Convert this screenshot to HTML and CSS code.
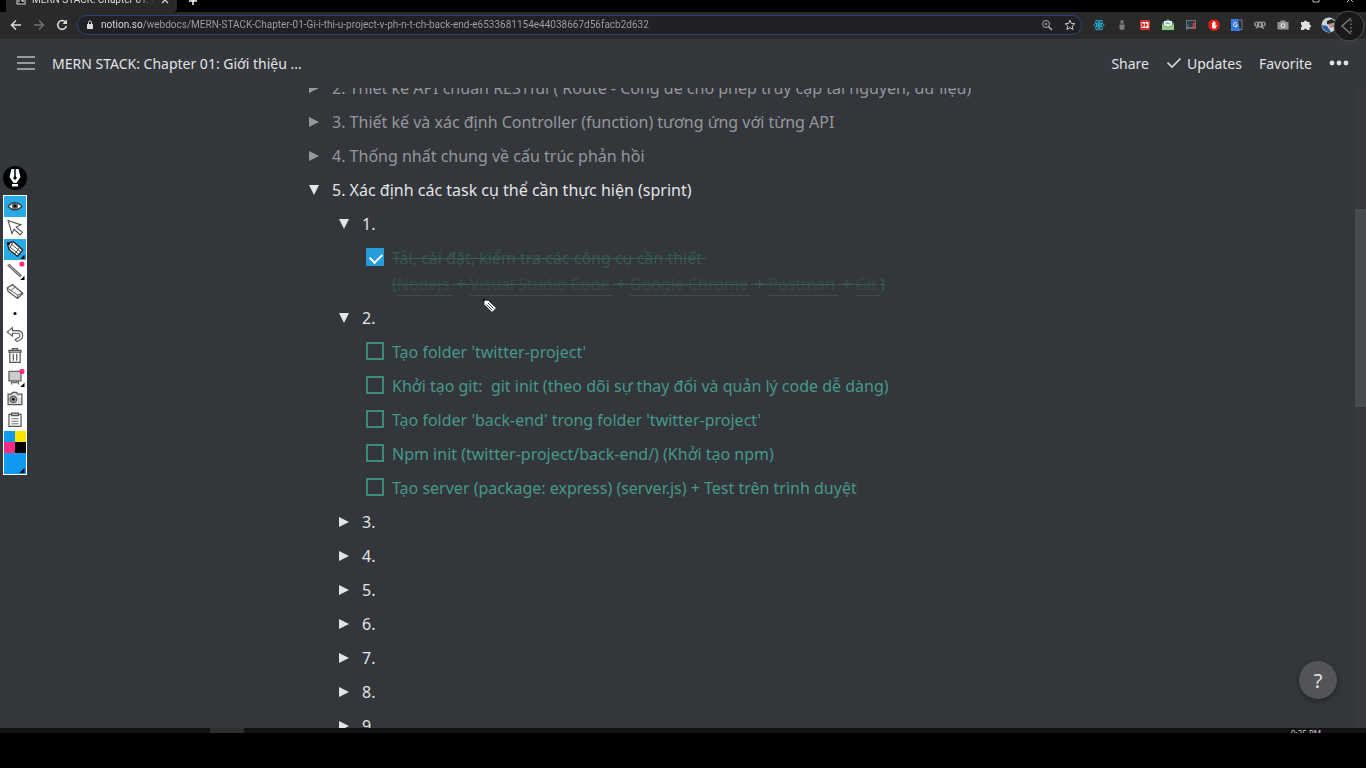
FILE: index.html
```html
<!DOCTYPE html>
<html lang="vi">
<head>
<meta charset="utf-8">
<title>MERN STACK: Chapter 01</title>
<link rel="stylesheet" href="styles.css">
</head>
<body>
<svg class="defs" width="0" height="0" aria-hidden="true">
  <symbol id="tri" viewBox="0 0 10 10"><path d="M0 0 10 5 0 10z" fill="currentColor"/></symbol>
  <symbol id="tri-down" viewBox="0 0 10 10"><path d="M0 0H10L5 10z" fill="currentColor"/></symbol>
</svg>

<div class="tabstrip">
  <div class="tab">
    <svg class="favicon" width="10" height="10" viewBox="0 0 10 10"><rect x="1" y="0" width="8" height="9" fill="#111" stroke="#ddd"/><path d="M3 7.500V2L7 7V2" fill="none" stroke="#fff"/></svg>
    <span class="tab-title">MERN STACK: Chapter 01: Giới thiệu</span>
    <button class="tab-close" aria-label="Close tab"><svg width="8" height="8" viewBox="0 0 8 8"><path d="M1 1l6 6M7 1l-6 6" stroke="#ddd" stroke-width="1.200"/></svg></button>
  </div>
  <button class="tab-new" aria-label="New tab"><svg width="10" height="10" viewBox="0 0 10 10"><path d="M5 1v8M1 5h8" stroke="#fff" stroke-width="1.500"/></svg></button>
  <div class="window-buttons">
    <svg width="8" height="8" viewBox="0 0 8 8"><path d="M1 1h6v6H1z" fill="none" stroke="#bbb"/></svg>
    <svg width="8" height="8" viewBox="0 0 8 8"><path d="M1 1l6 6M7 1l-6 6" stroke="#bbb"/></svg>
  </div>
</div>

<div class="toolbar">
  <button aria-label="Back"><svg width="12" height="12" viewBox="0 0 12 12"><path d="M11 6H2M6 1.500 1.500 6 6 10.500" fill="none" stroke="#ddd" stroke-width="1.500"/></svg></button>
  <button aria-label="Forward"><svg width="12" height="12" viewBox="0 0 12 12"><path d="M1 6h9M6 1.500 10.500 6 6 10.500" fill="none" stroke="#6f7072" stroke-width="1.500"/></svg></button>
  <button aria-label="Reload"><svg width="12" height="12" viewBox="0 0 12 12"><path d="M9.800 3.500A4.400 4.400 0 1 0 10.400 7" fill="none" stroke="#ddd" stroke-width="1.500"/><path d="M11 .5V5H6.500z" fill="#ddd"/></svg></button>
  <div class="omnibox">
    <svg width="8" height="10" viewBox="0 0 8 10"><rect x="1" y="4" width="6" height="5" rx=".5" fill="#ddd"/><path d="M2.500 4V2.500a1.500 1.500 0 0 1 3 0V4" fill="none" stroke="#ddd"/></svg>
    <input class="address" aria-label="Address" value="notion.so/webdocs/MERN-STACK-Chapter-01-Gi-i-thi-u-project-v-ph-n-t-ch-back-end-e6533681154e44038667d56facb2d632">
    <svg width="12" height="12" viewBox="0 0 12 12" fill="none" stroke="#aaa"><circle cx="5" cy="5" r="3.500"/><path d="M7.600 7.600 11 11" stroke-width="1.500"/><path d="M3.500 5h3M5 3.500v3" stroke-width=".8"/></svg>
    <svg width="12" height="12" viewBox="0 0 12 12"><path d="M6 1.200 7.400 4.500l3.500.2-2.700 2.300.9 3.500L6 8.600 2.900 10.500l.9-3.500L1.100 4.700l3.500-.2z" fill="none" stroke="#ccc"/></svg>
  </div>
  <div class="extensions">
    <svg viewBox="0 0 12 12" fill="none" stroke="#25a9c9" stroke-width=".9"><ellipse cx="6" cy="6" rx="5.200" ry="2"/><ellipse cx="6" cy="6" rx="5.200" ry="2" transform="rotate(60 6 6)"/><ellipse cx="6" cy="6" rx="5.200" ry="2" transform="rotate(120 6 6)"/><circle cx="6" cy="6" r="1" fill="#25a9c9"/></svg>
    <svg viewBox="0 0 12 12" fill="#7b7c7d"><circle cx="6" cy="2.500" r="1.600"/><path d="M3.500 4.500h5v1h-5zM3.500 6h5v2.500a2.500 2.500 0 0 1-5 0z"/></svg>
    <svg viewBox="0 0 12 12"><rect x="1" y="1" width="10" height="10" rx="1.500" fill="#d9302c"/><rect x="2.500" y="3" width="7" height="6" rx=".5" fill="#fff"/><path d="M3 3.500 6 6 3 8.500zM6 3.500 9 6 6 8.500z" fill="#d9302c"/></svg>
    <svg viewBox="0 0 12 12"><path d="M0 4 6 0l6 4v7H0z" fill="#4fa35b"/><path d="M2 2h8v4L6 8 2 6z" fill="#f1f1f1"/><path d="M3.500 5 5 3.500 6 5l2-1.500" fill="none" stroke="#4c72a8" stroke-width=".8"/><path d="M0 5l6 4 6-4v6H0z" fill="#91ce8e"/></svg>
    <svg viewBox="0 0 12 12"><path d="M1 1h10v9H4L1 11z" fill="#6a6f78"/><path d="M2 2h8v6H2z" fill="#333a4c"/><path d="M2 5h2v3H2z" fill="#335c99"/><path d="M8 4h2l-1 6H7z" fill="#d04332"/></svg>
    <svg viewBox="0 0 12 12"><path d="M3.500.5h5l3 3v5l-3 3h-5l-3-3v-5z" fill="#e51d17"/><path d="M4 9V4h.8v2V2.500h.9V6 2h.9v4-3h.9v4l.9-1 .5.500L7.500 9.500h-2z" fill="#fff"/></svg>
    <svg viewBox="0 0 12 12"><path d="M0 0h7l2 12H0z" fill="#377be5"/><path d="M6 1h5v9.500H8" fill="none" stroke="#6d7d94"/><path d="M6 4.200A2 2 0 1 0 6.500 6H4.700" fill="none" stroke="#fff" stroke-width=".9"/></svg>
    <svg viewBox="0 0 12 12" fill="none" stroke="#a6a6a6" stroke-width="1.200"><circle cx="2.800" cy="5" r="2"/><circle cx="6" cy="5.500" r="2.300"/><circle cx="9.200" cy="5" r="2"/><path d="M2 9l2-1M7 8l3 1.500"/></svg>
    <svg viewBox="0 0 12 12"><path d="M.5 3H3l1-1.500h4L9 3h2.500v7.500H.5z" fill="#929394"/><circle cx="6" cy="6.500" r="2.300" fill="#eee"/><circle cx="6" cy="6.500" r="1.200" fill="#777"/></svg>
    <svg viewBox="0 0 12 12"><path d="M1 3h3a1.500 1.500 0 1 1 3 0h2.500v2.500a1.500 1.500 0 1 1 0 3V11H7a1.500 1.500 0 0 0-3 0H1V8.300a1.500 1.500 0 0 0 0-2.800z" fill="#e2e2e2"/></svg>
  </div>
  <svg class="avatar" viewBox="0 0 16 16"><circle cx="8" cy="8" r="7.500" fill="#c9d4dc"/><path d="M1 8l5 1 4 6A7.500 7.500 0 0 1 1 8z" fill="#275b9c"/><path d="M6 4l5-2 3 3-4 3-4-1z" fill="#292425"/><path d="M7 7l5-1 1 4-4 1z" fill="#c98b85"/></svg>
</div>

<header class="topbar">
  <button class="menu" aria-label="Menu"><svg width="18" height="16" viewBox="0 0 18 16"><path d="M0 2h18M0 8h18M0 14h18" stroke="#b9babc" stroke-width="1.600"/></svg></button>
  <h1>MERN STACK: Chapter 01: Giới thiệu ...</h1>
  <nav class="actions">
    <button>Share</button>
    <button class="updates"><svg width="16" height="12" viewBox="0 0 16 12"><path d="M1.500 5.500 6 10 14.500 1.500" fill="none" stroke="#d6d7d8" stroke-width="1.700"/></svg>Updates</button>
    <button>Favorite</button>
    <button aria-label="More"><svg width="20" height="6" viewBox="0 0 20 6" fill="#e0e1e2"><circle cx="3" cy="3" r="2.400"/><circle cx="10" cy="3" r="2.400"/><circle cx="17" cy="3" r="2.400"/></svg></button>
  </nav>
</header>

<main class="page">
  <ul class="outline">
    <li class="muted"><button class="toggle"><svg><use href="#tri"/></svg>2. Thiết kế API chuẩn RESTful ( Route - Cổng để cho phép truy cập tài nguyên, dữ liệu)</button></li>
    <li class="muted"><button class="toggle"><svg><use href="#tri"/></svg>3. Thiết kế và xác định Controller (function) tương ứng với từng API</button></li>
    <li class="muted"><button class="toggle"><svg><use href="#tri"/></svg>4. Thống nhất chung về cấu trúc phản hồi</button></li>
    <li><button class="toggle"><svg><use href="#tri-down"/></svg>5. Xác định các task cụ thể cần thực hiện (sprint)</button>
      <ul>
        <li><button class="toggle"><svg><use href="#tri-down"/></svg>1.</button>
          <ul>
            <li class="task done"><input type="checkbox" id="t0" checked><label for="t0"><s>Tải, cài đặt, kiểm tra các công cụ cần thiết&nbsp;<br>(<a href="#nodejs">Nodejs</a> + <a href="#vscode">Visual Studio Code</a> + <a href="#chrome">Google Chrome</a> + <a href="#postman">Postman</a> + <a href="#git">Git</a>)</s></label></li>
          </ul>
        </li>
        <li><button class="toggle"><svg><use href="#tri-down"/></svg>2.</button>
          <ul>
            <li class="task"><input type="checkbox" id="t1"><label for="t1">Tạo folder 'twitter-project'</label></li>
            <li class="task"><input type="checkbox" id="t2"><label for="t2">Khởi tạo git:&nbsp; git init (theo dõi sự thay đổi và quản lý code dễ dàng)</label></li>
            <li class="task"><input type="checkbox" id="t3"><label for="t3">Tạo folder 'back-end' trong folder 'twitter-project'</label></li>
            <li class="task"><input type="checkbox" id="t4"><label for="t4">Npm init (twitter-project/back-end/) (Khởi tạo npm)</label></li>
            <li class="task"><input type="checkbox" id="t5"><label for="t5">Tạo server (package: express) (server.js) + Test trên trình duyệt</label></li>
          </ul>
        </li>
        <li><button class="toggle"><svg><use href="#tri"/></svg>3.</button></li>
        <li><button class="toggle"><svg><use href="#tri"/></svg>4.</button></li>
        <li><button class="toggle"><svg><use href="#tri"/></svg>5.</button></li>
        <li><button class="toggle"><svg><use href="#tri"/></svg>6.</button></li>
        <li><button class="toggle"><svg><use href="#tri"/></svg>7.</button></li>
        <li><button class="toggle"><svg><use href="#tri"/></svg>8.</button></li>
        <li><button class="toggle"><svg><use href="#tri"/></svg>9.</button></li>
      </ul>
    </li>
  </ul>
  <div class="scrollbar"><div class="thumb"></div></div>
  <button class="help" aria-label="Help">?</button>
</main>

<footer class="taskbar"><span class="running"></span><span class="clock">9:25 PM</span></footer>

<aside class="pen-tools">
  <svg class="nib" width="24" height="24" viewBox="0 0 24 24"><circle cx="12" cy="12" r="12" fill="#000"/><path d="M8.500 3h7l2 8-4 6h-3l-4-6z" fill="#fff"/><path d="M9 18h6v2.500H9z" fill="#fff"/><path d="M12 3v8" stroke="#000" stroke-width="1.500"/><circle cx="12" cy="12" r="1.700"/></svg>
  <div class="palette">
    <button class="on" aria-label="Show"><svg viewBox="0 0 22 22"><path d="M3 11q8-9 16 0-8 8-16 0z" fill="#fff" stroke="#333" stroke-width="1.300"/><circle cx="11" cy="10.500" r="3.500" fill="#555"/><circle cx="11" cy="10.500" r="1.500"/></svg></button>
    <button aria-label="Select"><svg viewBox="0 0 22 22"><path d="M3 3l15 5-5.500 2.500 7 6-2.500 3-7-6.500-2.500 5z" fill="#fff" stroke="#555" stroke-width="1.300"/></svg></button>
    <button class="on" aria-label="Pen"><svg viewBox="0 0 22 22"><path d="M2 3.500 9 2l11 9.500-6 7.500L4 11z" fill="#fff" stroke="#222" stroke-width="1.500"/><path d="M2 3.500 6 3 4 7z"/><path d="M7 5 18 14M5 8l11 9M9 2 4 11M16 9l-5 7" stroke="#333"/><path d="M22 17v5h-5z"/></svg></button>
    <button aria-label="Line"><svg viewBox="0 0 22 22"><path d="M3 4 18 18" stroke="#555" stroke-width="3"/><path d="M3 4 18 18" stroke="#ddd"/><circle cx="19" cy="3.500" r="3" fill="#ff2c86"/><path d="M22 17v5h-5z"/></svg></button>
    <button aria-label="Eraser"><svg viewBox="0 0 22 22"><path d="M2 7l6-4 12 10-6 6L3 11z" fill="#f4f4f4" stroke="#555" stroke-width="1.400"/><path d="M2 7l12 8 6-2M14 15v4M11 6 6 10" fill="none" stroke="#555"/></svg></button>
    <button aria-label="Size"><svg viewBox="0 0 22 22"><circle cx="11" cy="11" r="1.800"/></svg></button>
    <button aria-label="Undo"><svg viewBox="0 0 22 22"><path d="M8 3 2 8l6 5v-3.500h6q4 .5 2 4.500L11 17l2 2q7-1.500 7-7 0-5.500-7-5.500H8z" fill="#fff" stroke="#555" stroke-width="1.200"/></svg></button>
    <button aria-label="Delete"><svg viewBox="0 0 22 22" fill="none" stroke="#555" stroke-width="1.400"><path d="M5 7h12v12H5zM4 5h14v2H4zM8 5V3h6v2M9 9v8M13 9v8"/></svg></button>
    <button aria-label="Board"><svg viewBox="0 0 22 22"><path d="M4 4h14v11H4zM7 15v4M15 15v4M9 15v2h4v-2" fill="#ccc" stroke="#666" stroke-width="1.500"/><circle cx="19" cy="4" r="3" fill="#ff2c86"/><path d="M22 17v5h-5z"/></svg></button>
    <button aria-label="Capture"><svg viewBox="0 0 22 22"><path d="M3 6h4l1-2h5l1 2h5v12H3z" fill="#ddd" stroke="#555" stroke-width="1.400"/><circle cx="9" cy="12" r="4" fill="#999" stroke="#444"/><circle cx="9" cy="12" r="1.500"/><path d="M15 8h3v2h-3z" fill="#fff"/></svg></button>
    <button aria-label="Clipboard"><svg viewBox="0 0 22 22" fill="none" stroke="#555" stroke-width="1.400"><path d="M4 5h14v14H4z"/><path d="M7 3.500h8v3H7z" fill="#bbb"/><path d="M7 10h8M7 13h8M7 16h8" stroke-width="1"/></svg></button>
    <div class="swatches">
      <button class="blue" aria-label="Blue"></button><button class="yellow" aria-label="Yellow"></button>
      <button class="pink" aria-label="Pink"></button><button class="black" aria-label="Black"></button>
    </div>
    <button class="current" aria-label="Current colour"><svg viewBox="0 0 22 22"><path d="M22 16v6h-6z"/></svg></button>
  </div>
</aside>

<svg class="cursor" width="16" height="16" viewBox="0 0 16 16"><path d="M1.500 1.500 6.500 2.500l8 7.500-4.500 4.500-8-8z" fill="#fff" stroke="#222"/><path d="M6 5 11.500 10.500M4.500 6.500 10 12" stroke="#333"/><path d="M1 1l3 .5L1.500 4z"/></svg>
<button class="recorder" aria-label="Open panel"><svg width="32" height="32" viewBox="0 0 32 32"><circle cx="16" cy="16" r="15" fill="#19191a" stroke="#505050"/><path d="M18 8l-9 8 9 8" fill="none" stroke="#77787a" stroke-width="1.500"/><path d="M18 10v14" stroke="#77787a" stroke-width="1.500" stroke-dasharray="1.500 2"/></svg></button>
</body>
</html>
```
FILE: styles.css
```css
* { box-sizing: border-box; }

body {
  margin: 0;
  height: 100vh;
  display: flex;
  flex-direction: column;
  overflow: hidden;
  position: relative;
  background: #000;
  color: #e3e4e5;
  font-family: "Segoe UI", "Noto Sans", "Open Sans", sans-serif;
  font-size: 16px;
}

button {
  margin: 0;
  padding: 0;
  border: 0;
  background: none;
  color: inherit;
  font: inherit;
}

svg { display: block; flex: none; }
.defs { position: absolute; }

.tabstrip {
  flex: none;
  height: 12px;
  display: flex;
  align-items: flex-start;
  padding-left: 6px;
  overflow: hidden;
}
.tab {
  display: flex;
  align-items: center;
  gap: 6px;
  width: 171px;
  height: 12px;
  padding: 0 8px 12px 10px;
  background: #2a2a2b;
  border-radius: 0 0 4px 0;
}
.tab-title {
  flex: 1;
  overflow: hidden;
  white-space: nowrap;
  font-family: Roboto, sans-serif;
  font-size: 10px;
  line-height: 16px;
  color: #ddd;
  mask-image: linear-gradient(90deg, #000 85%, transparent);
}
.tab-new { margin: -4px 0 0 11px; }
.window-buttons { display: flex; gap: 26px; margin: -5px 12px 0 auto; }

.toolbar {
  flex: none;
  display: flex;
  align-items: center;
  gap: 11px;
  height: 27px;
  padding: 0 30px 1px 10px;
  background: #2a2a2b;
}
.omnibox {
  flex: 1;
  display: flex;
  align-items: center;
  gap: 11px;
  height: 20px;
  margin-left: -2px;
  padding: 0 5px 0 8px;
  background: #202124;
  border: 1px solid #264573;
  border-radius: 10px;
}
.address {
  flex: 1;
  min-width: 0;
  padding: 0;
  margin-left: -4px;
  border: 0;
  outline: 0;
  font: 10px/16px Roboto, sans-serif;
  color: transparent;
  background: linear-gradient(90deg, #e8e8e8 42px, #a2a3a5 42px);
  background-clip: text;
}
.extensions { display: flex; gap: 11px; }
.extensions svg { width: 12px; height: 12px; }
.avatar { width: 16px; height: 16px; margin: 0 -1px 0 -2px; }

.topbar {
  flex: none;
  display: flex;
  align-items: center;
  gap: 17px;
  height: 49px;
  padding: 0 17px 1px;
  background: #34373b;
}
h1 { margin: 0; font-size: 14px; font-weight: 400; }
.actions { display: flex; align-items: center; gap: 17px; margin-left: auto; font-size: 14px; }
.updates { display: flex; align-items: center; gap: 5px; }

.page {
  flex: 1;
  min-height: 0;
  position: relative;
  overflow: hidden;
  background: #33363b;
}
.outline { margin: -17px 350px 0 309px; }
ul { margin: 0; padding: 0; list-style: none; }
ul ul { padding-left: 30px; }
.toggle {
  display: flex;
  align-items: center;
  gap: 13px;
  padding: 4px 0;
  line-height: 26px;
  white-space: nowrap;
}
.toggle svg { width: 10px; height: 10px; }
.muted { color: #96989b; }

.task { display: flex; gap: 8px; padding: 4px 0; line-height: 26px; color: #469987; white-space: nowrap; }
.task input {
  appearance: none;
  flex: none;
  width: 18px;
  height: 18px;
  margin: 3px 0 0 -3px;
  border: 2px solid #3d8b7c;
}
.task input:checked {
  border: 0;
  background: #269cdd;
  position: relative;
}
.task input:checked::after {
  content: "";
  position: absolute;
  left: 6px;
  top: 3px;
  width: 6px;
  height: 10px;
  border: solid #fff;
  border-width: 0 2px 2px 0;
  transform: rotate(45deg);
}
.done { color: #385750; }
.done s { text-decoration-color: #35615a; }
.done a { padding-right: 3px; color: #374845; text-decoration: none; border-bottom: 1px solid #45494c; }

.scrollbar { position: absolute; inset: 0 0 0 auto; width: 11px; background: #36383c; }
.thumb { height: 31%; margin-top: 121px; background: #474a4e; }
.help {
  position: absolute;
  right: 29px;
  bottom: 29px;
  width: 38px;
  height: 38px;
  border-radius: 50%;
  background: #525459;
  box-shadow: 0 2px 5px #222427;
  font-size: 20px;
}

.taskbar {
  flex: none;
  display: flex;
  justify-content: space-between;
  height: 5px;
  margin-bottom: 35px;
  padding: 0 45px 0 210px;
  overflow: hidden;
  background: #121214;
}
.running { width: 34px; background: #2d2e30; }
.clock { font-size: 8px; line-height: 12px; color: #ccc; }

.pen-tools { position: absolute; left: 3px; top: 166px; width: 24px; }
.palette {
  display: flex;
  flex-direction: column;
  height: 280px;
  margin-top: 5px;
  padding: 1px;
  background: #fff;
}
.palette > button { flex: 1; padding: 1px 0; }
.palette svg { width: 22px; height: 19px; }
.palette .on { background: #2aa9e8; }
.swatches { display: grid; grid-template-columns: 1fr 1fr; }
.swatches button { height: 11px; }
.blue, .palette .current { background: #109bf0; }
.yellow { background: #ffe500; }
.pink { background: #ff2c86; }
.black { background: #000; }

.cursor { position: absolute; left: 482px; top: 298px; }
.recorder { position: absolute; right: 1px; top: 10px; }
```
